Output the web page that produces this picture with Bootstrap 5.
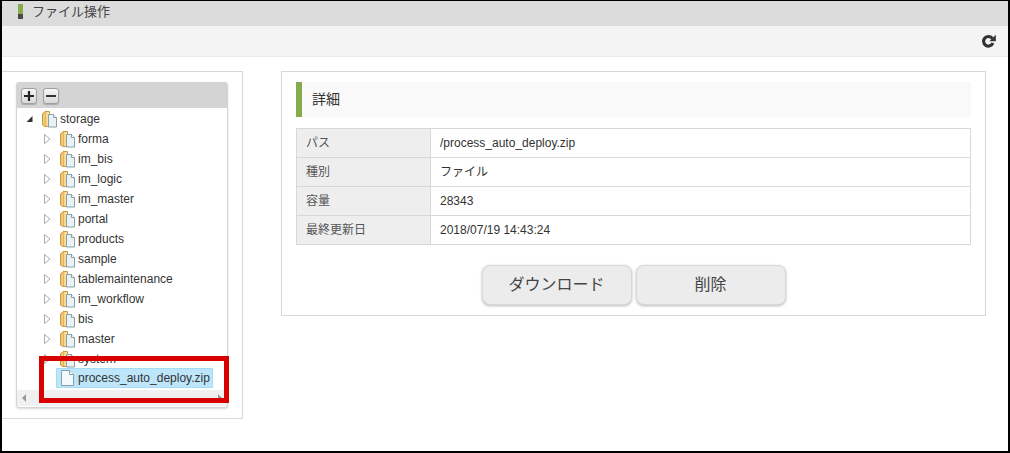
<!DOCTYPE html>
<html lang="ja">
<head>
<meta charset="utf-8">
<title>ファイル操作</title>
<link rel="stylesheet" href="https://cdn.jsdelivr.net/npm/bootstrap@5.3.0/dist/css/bootstrap.min.css">
<style>
html,body{height:453px;overflow:hidden;background:#fff}
body{font-family:"Liberation Sans","Noto Sans CJK JP",sans-serif;font-size:12px;color:#333}
.frame{height:453px;border-style:solid;border-color:#000;border-width:1px 2px 2px 2px;position:relative;overflow:hidden}
.title-bar{height:25px;background:#dcdcdc;padding-left:16px;font-size:13px;line-height:22px;color:#444}
.title-mark{width:5px;height:15px;background:linear-gradient(#85ab4b 0 10px,#4a4a40 10px);margin-right:1px}
.tool-bar{height:31px;background:#f4f4f4;border-bottom:1px solid #eaeaea;padding-right:12px}
.content-area{padding-top:14px}
.left-pane{width:241px;height:348px;border:1px solid #d8d8d8;border-left:0;padding:10px 14px 0 14px;margin-right:38px;flex:none}
.tree-box{width:212px;height:326px;border:1px solid #d4d4d4;border-top:0;border-radius:3px;box-shadow:0 1px 2px rgba(0,0,0,.15);overflow:hidden;position:relative}
.tree-head{height:26px;background:#d4d4d4;margin:0 -1px;padding:6px 0 0 5px;gap:6px}
.tree-btn{width:16px;height:16px;border:1px solid #a0a0a0;border-radius:3px;background:linear-gradient(#f6f6f6,#d8d8d8);padding:0;display:block;box-shadow:0 1px 1px rgba(0,0,0,.2)}
.tree-btn svg{display:block}
.tree-row{height:20px;line-height:20px;font-size:12px;color:#333;white-space:nowrap;gap:2px;position:relative;top:1px}
.lvl0{padding-left:8px}
.lvl1{padding-left:26px}
.arrow-box{width:10px;flex:none;margin-right:7px}
.lvl0 .arrow-box,.lvl1 .arrow-box{margin-right:5px}
.arrow-box svg,.doc-icon svg{display:block}
.doc-icon{width:16px;height:18px;flex:none}
.file-sel{background:#bde6fb;border:1px solid #a6dcf6;height:20px;line-height:18px;margin:0 0 0 39px;width:157px;padding-left:3px;top:0}
.hscroll{position:absolute;left:0;right:0;bottom:1px;height:16px;background:#f0f0f0}
.main-pane{width:705px;height:245px;border:1px solid #d8d8d8;padding:10px 14px 14px;flex:none}
.detail-head{height:35px;background:#f9f9f9;border-left:6px solid #85ab4b;padding-left:10px;font-size:14px;line-height:35px;color:#333;margin-bottom:11px}
.info-table{width:675px;border-collapse:collapse;table-layout:fixed;margin-bottom:20px}
.info-table th,.info-table td{border:1px solid #d8d8d8;height:29px;padding:0 9px;font-weight:400;font-size:12px;color:#333}
.info-table th{width:134px;background:#eee;color:#555}
.act-btn{width:150px;height:40px;background:#ececec;border:1px solid #d8d8d8;border-radius:8px;box-shadow:0 1px 3px rgba(0,0,0,.28);font-size:16px;color:#444;padding:0;--bs-btn-hover-bg:#e4e4e4}
.act-gap{gap:4px}
.red-mark{position:absolute;left:37px;top:355px;width:190px;height:47px;border:5px solid #d90000;pointer-events:none}
</style>
</head>
<body>
<div class="frame">
  <div class="title-bar d-flex align-items-center gap-2 pb-1">
    <span class="title-mark"></span><span>ファイル操作</span>
  </div>
  <div class="tool-bar d-flex justify-content-end align-items-center">
    <svg width="14" height="14" viewBox="0 0 14 14" role="img" aria-label="更新"><path d="M10.400 4.600A4.800 4.800 0 1 0 10.900 9" fill="none" stroke="#333" stroke-width="3.200"/><path d="M13.800.8v6.400H7.400z" fill="#333"/></svg>
  </div>
  <div class="content-area d-flex">
    <div class="left-pane">
      <div class="tree-box">
        <div class="tree-head d-flex">
          <button class="tree-btn" type="button" aria-label="展開"><svg width="14" height="14" viewBox="0 0 14 14"><path d="M2 7h10M7 2v10" stroke="#222" stroke-width="2.200"/></svg></button>
          <button class="tree-btn" type="button" aria-label="折りたたみ"><svg width="14" height="14" viewBox="0 0 14 14"><path d="M2 7h10" stroke="#333" stroke-width="2.200"/></svg></button>
        </div>
        <svg width="0" height="0" class="d-block">
          <defs>
            <linearGradient id="fold-fill" x1="0" y1="0" x2="1" y2="0"><stop offset="0" stop-color="#f0c060"/><stop offset="1" stop-color="#fde9b0"/></linearGradient>
            <g id="folder">
              <path d="M.5 4 3 1.500h4.500V16.500H3L.5 15z" fill="url(#fold-fill)" stroke="#c79a4a"/>
              <path d="M3.500 2v14" fill="none" stroke="#e2b45e"/>
              <path d="M6.500 4.500h5l3 3V17h-8z" fill="#eaf2f5" stroke="#86a0a8"/>
              <path d="M11.500 4.500v3h3" fill="#fff" stroke="#86a0a8"/>
            </g>
            <path id="closed" d="M1.500 2.500 7 7l-5.500 4.500z" fill="#fff" stroke="#aaa"/>
          </defs>
        </svg>
        <div class="tree-row lvl0 d-flex align-items-center"><span class="arrow-box"><svg width="10" height="10" viewBox="0 0 10 10"><path d="M7.500 2v6H1.500z" fill="#333"/></svg></span><span class="doc-icon"><svg width="16" height="18"><use href="#folder"/></svg></span><span>storage</span></div>
        <div class="tree-row lvl1 d-flex align-items-center"><span class="arrow-box"><svg width="10" height="14"><use href="#closed"/></svg></span><span class="doc-icon"><svg width="16" height="18"><use href="#folder"/></svg></span><span>forma</span></div>
        <div class="tree-row lvl1 d-flex align-items-center"><span class="arrow-box"><svg width="10" height="14"><use href="#closed"/></svg></span><span class="doc-icon"><svg width="16" height="18"><use href="#folder"/></svg></span><span>im_bis</span></div>
        <div class="tree-row lvl1 d-flex align-items-center"><span class="arrow-box"><svg width="10" height="14"><use href="#closed"/></svg></span><span class="doc-icon"><svg width="16" height="18"><use href="#folder"/></svg></span><span>im_logic</span></div>
        <div class="tree-row lvl1 d-flex align-items-center"><span class="arrow-box"><svg width="10" height="14"><use href="#closed"/></svg></span><span class="doc-icon"><svg width="16" height="18"><use href="#folder"/></svg></span><span>im_master</span></div>
        <div class="tree-row lvl1 d-flex align-items-center"><span class="arrow-box"><svg width="10" height="14"><use href="#closed"/></svg></span><span class="doc-icon"><svg width="16" height="18"><use href="#folder"/></svg></span><span>portal</span></div>
        <div class="tree-row lvl1 d-flex align-items-center"><span class="arrow-box"><svg width="10" height="14"><use href="#closed"/></svg></span><span class="doc-icon"><svg width="16" height="18"><use href="#folder"/></svg></span><span>products</span></div>
        <div class="tree-row lvl1 d-flex align-items-center"><span class="arrow-box"><svg width="10" height="14"><use href="#closed"/></svg></span><span class="doc-icon"><svg width="16" height="18"><use href="#folder"/></svg></span><span>sample</span></div>
        <div class="tree-row lvl1 d-flex align-items-center"><span class="arrow-box"><svg width="10" height="14"><use href="#closed"/></svg></span><span class="doc-icon"><svg width="16" height="18"><use href="#folder"/></svg></span><span>tablemaintenance</span></div>
        <div class="tree-row lvl1 d-flex align-items-center"><span class="arrow-box"><svg width="10" height="14"><use href="#closed"/></svg></span><span class="doc-icon"><svg width="16" height="18"><use href="#folder"/></svg></span><span>im_workflow</span></div>
        <div class="tree-row lvl1 d-flex align-items-center"><span class="arrow-box"><svg width="10" height="14"><use href="#closed"/></svg></span><span class="doc-icon"><svg width="16" height="18"><use href="#folder"/></svg></span><span>bis</span></div>
        <div class="tree-row lvl1 d-flex align-items-center"><span class="arrow-box"><svg width="10" height="14"><use href="#closed"/></svg></span><span class="doc-icon"><svg width="16" height="18"><use href="#folder"/></svg></span><span>master</span></div>
        <div class="tree-row lvl1 d-flex align-items-center"><span class="arrow-box"><svg width="10" height="14"><use href="#closed"/></svg></span><span class="doc-icon"><svg width="16" height="18"><use href="#folder"/></svg></span><span>system</span></div>
        <div class="tree-row file-sel d-flex align-items-center"><span class="doc-icon"><svg width="16" height="18" viewBox="0 0 16 18"><path d="M1.500 1.500h8l4 4v11h-12z" fill="#f4f9fb" stroke="#86a0a8"/><path d="M9.500 1.500v4h4" fill="#fff" stroke="#86a0a8"/></svg></span><span>process_auto_deploy.zip</span></div>
        <div class="hscroll d-flex justify-content-between align-items-center px-1">
          <svg width="6" height="8" viewBox="0 0 6 8"><path d="M5 0v8L1 4z" fill="#999"/></svg>
          <svg width="6" height="8" viewBox="0 0 6 8"><path d="M1 0v8l4-4z" fill="#999"/></svg>
        </div>
      </div>
    </div>
    <div class="main-pane">
      <div class="detail-head">詳細</div>
      <table class="info-table">
        <tbody>
          <tr><th>パス</th><td>/process_auto_deploy.zip</td></tr>
          <tr><th>種別</th><td>ファイル</td></tr>
          <tr><th>容量</th><td>28343</td></tr>
          <tr><th>最終更新日</th><td>2018/07/19 14:43:24</td></tr>
        </tbody>
      </table>
      <div class="d-flex justify-content-center act-gap">
        <button class="btn act-btn" type="button">ダウンロード</button>
        <button class="btn act-btn" type="button">削除</button>
      </div>
    </div>
  </div>
  <div class="red-mark"></div>
</div>
</body>
</html>
